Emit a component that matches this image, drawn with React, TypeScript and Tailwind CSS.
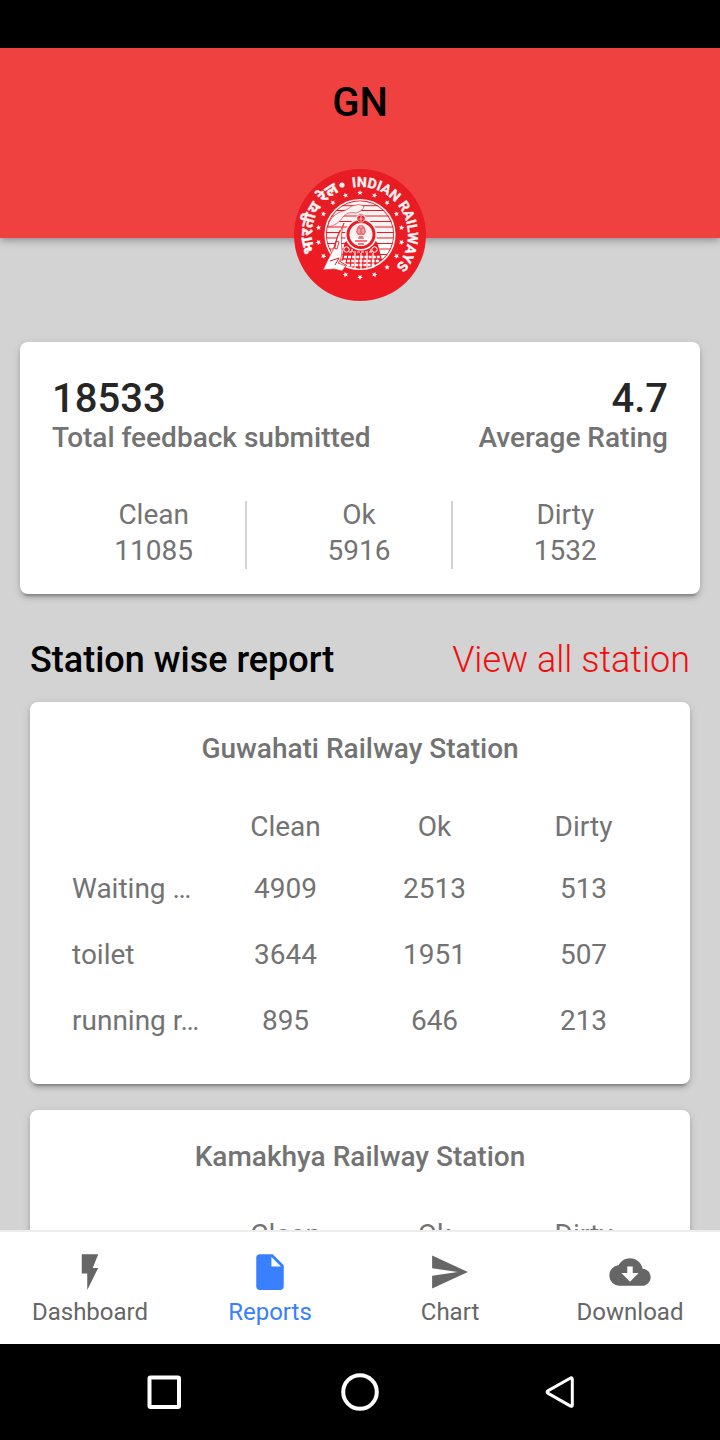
import React from 'react';
import { IoMdCloudDownload, IoMdDocument, IoMdFlash, IoMdSend } from 'react-icons/io';

const totals = [
  { label: 'Clean', value: 11085 },
  { label: 'Ok', value: 5916 },
  { label: 'Dirty', value: 1532 },
];

const stations = [
  {
    name: 'Guwahati Railway Station',
    rows: [
      { area: 'Waiting …', clean: 4909, ok: 2513, dirty: 513 },
      { area: 'toilet', clean: 3644, ok: 1951, dirty: 507 },
      { area: 'running r…', clean: 895, ok: 646, dirty: 213 },
    ],
  },
  { name: 'Kamakhya Railway Station', rows: [] },
];

const tabs = [
  { label: 'Dashboard', icon: IoMdFlash, active: false },
  { label: 'Reports', icon: IoMdDocument, active: true },
  { label: 'Chart', icon: IoMdSend, active: false },
  { label: 'Download', icon: IoMdCloudDownload, active: false },
];

const cardClass =
  'rounded-lg bg-white shadow-[0_6px_2px_-4px_rgba(0,0,0,0.2),0_4px_4px_rgba(0,0,0,0.14),0_2px_10px_rgba(0,0,0,0.12)]';

const starAngles = Array.from({ length: 18 }, (_, i) => i * 20);

const RailwayLogo: React.FC = () => (
  <svg viewBox="0 0 132 132" className="h-[132px] w-[132px]" role="img" aria-label="Indian Railways">
    <defs>
      <path id="ring" d="M66 114a48 48 0 1 1 .01 0" />
      <clipPath id="disc">
        <circle cx="66" cy="65.5" r="34" />
      </clipPath>
      <clipPath id="badge">
        <circle cx="66" cy="66" r="66" />
      </clipPath>
    </defs>
    <circle cx="66" cy="66" r="66" fill="#ed1c24" />

    {/* Ring lettering */}
    <text
      fill="#fff"
      stroke="#fff"
      strokeWidth=".3"
      fontSize="14"
      fontWeight="700"
      fontFamily="Roboto, sans-serif"
    >
      <textPath href="#ring" startOffset="143">INDIAN RAILWAYS</textPath>
    </text>
    <text
      fill="#fff"
      stroke="#fff"
      strokeWidth=".4"
      fontSize="16"
      fontWeight="700"
      fontFamily="'Noto Sans Devanagari', 'Noto Sans', sans-serif"
    >
      <textPath href="#ring" startOffset="57">भारतीय रेल</textPath>
    </text>
    <circle cx="48" cy="16" r="2.6" fill="#fff" />

    {starAngles.map(angle => (
      <path
        key={angle}
        d="M66 21l.8 1.8 1.9.2-1.5 1.2.5 1.9-1.7-1-1.7 1 .5-1.9-1.5-1.2 1.9-.2z"
        fill="#fff"
        transform={`rotate(${angle} 66 66)`}
      />
    ))}

    {/* Striped disc */}
    <circle cx="66" cy="65.5" r="34.8" fill="#ed1c24" stroke="#fff" strokeWidth="1.6" />
    <g clipPath="url(#disc)">
      <circle cx="66" cy="65.5" r="33.2" fill="#fff" />
      <path
        d="M32 36.7h68M32 41.5h68M32 47h68M32 52.5h68M32 58h68M32 63.5h68M32 69h68M32 74.5h68M32 80h68M32 85.5h68M32 91h68"
        stroke="#ed1c24"
        strokeWidth="1"
      />
    </g>

    {/* Engine front */}
    <path d="M50 76q1-5 6-5h22q5 0 6 5l4 15q-22 17-40 0z" fill="#ed1c24" />
    <path
      d="M50 88h36M49 92h37M53 96h28"
      stroke="#fff"
      strokeWidth="2.6"
      strokeDasharray="3 1.1"
    />
    <path d="M61 84v15M67 84v16M73 84v15M79 84v13" stroke="#fff" strokeWidth="1.2" />
    <path d="M55 83h25M58 80v4M77 80v4" stroke="#fff" strokeWidth="1.2" strokeDasharray="3 1" />
    <circle cx="52.5" cy="80.5" r="2.7" fill="#ed1c24" stroke="#fff" />
    <circle cx="80.5" cy="80.5" r="2.7" fill="#ed1c24" stroke="#fff" />
    <circle cx="67" cy="65.5" r="16" fill="#fff" />
    <circle cx="67" cy="65.5" r="13" fill="none" stroke="#ed1c24" strokeWidth="3" />
    <circle cx="67" cy="49" r="4.2" fill="#ed1c24" stroke="#fff" strokeWidth=".8" />
    <path d="M63 48q4-4 8 0M67 47v5M64.5 50h5" stroke="#fff" strokeWidth=".8" fill="none" />

    {/* Emblem */}
    <path
      d="M63 59q1-3 4-3t4 3l1 4-2 3h-6l-2-3zM65 67h4l1 3h-6zM61 71h12v2h-12zM64 74h6v2h-6z"
      fill="#ed1c24"
      opacity=".6"
    />
    <path d="M65 60v4M69 60v4M66 58h2" stroke="#fff" strokeWidth=".7" />

    {/* Smoke and side of the train */}
    <path
      d="M34 58q1-10 12-15 8-2 12-6 7-3 12 0-1 5-8 7-8-2-13 4-5 8-15 10z"
      fill="#fff"
      stroke="#ed1c24"
      strokeWidth=".6"
    />
    <path
      d="M50 54q-4 11-2 27 0 9-4 13l8 3-4 5-8-2-11 1q5-11 10-20 4-13 11-27z"
      fill="#fff"
      stroke="#ed1c24"
      strokeWidth=".7"
    />
    <path d="M46 61q-4 7-5 18M42 72l3 1-2 7-3-1z" stroke="#ed1c24" strokeWidth=".9" fill="none" />
    <path d="M36 92l9-3-4 7" stroke="#ed1c24" strokeWidth="1" fill="none" />

    {/* Header edge falling across the badge */}
    <rect width="132" height="69" clipPath="url(#badge)" fill="#8b1a3a" opacity=".06" />
  </svg>
);

const Header: React.FC = () => (
  <header className="relative z-10 h-[190px] shrink-0 bg-[#f04141] shadow-[0_2px_8px_rgba(0,0,0,0.35)]">
    <h1 className="pt-[31px] text-center text-[40px] leading-12 font-medium text-black">GN</h1>
    <div className="absolute -bottom-[63px] left-1/2 -translate-x-1/2">
      <RailwayLogo />
    </div>
  </header>
);

const Summary: React.FC = () => (
  <section className={`mx-5 mt-[104px] px-8 pt-8 pb-[25px] ${cardClass}`}>
    <div className="flex justify-between">
      <div>
        <p className="text-[40px] leading-[50px] font-medium text-[#262626]">18533</p>
        <p className="text-[28px] leading-7 font-medium text-[#737373]">Total feedback submitted</p>
      </div>
      <div className="text-right">
        <p className="text-[40px] leading-[50px] font-medium text-[#262626]">4.7</p>
        <p className="text-[28px] leading-7 font-medium text-[#737373]">Average Rating</p>
      </div>
    </div>
    <div className="mt-[49px] grid grid-cols-3 text-center text-[28px] leading-7 text-[#737373]">
      {totals.map((item, index) => (
        <div key={item.label} className="px-2.5">
          <div
            className={`flex flex-col gap-2 pb-1 ${index < totals.length - 1 ? 'border-r-2 border-[#d3d3d3]' : ''}`}
          >
            <p>{item.label}</p>
            <p>{item.value}</p>
          </div>
        </div>
      ))}
    </div>
  </section>
);

const StationCard: React.FC<{ station: (typeof stations)[number] }> = ({ station }) => (
  <section className={`px-8 pt-7 pb-[30px] text-[28px] text-[#737373] ${cardClass}`}>
    <h3 className="text-center leading-[38px] font-medium">{station.name}</h3>
    <table className="mt-[30px] w-full table-fixed text-center">
      <thead>
        <tr className="h-[58px]">
          <td />
          <th scope="col" className="font-normal">Clean</th>
          <th scope="col" className="font-normal">Ok</th>
          <th scope="col" className="font-normal">Dirty</th>
        </tr>
      </thead>
      <tbody>
        {station.rows.map(row => (
          <tr key={row.area} className="h-[66px]">
            <th scope="row" className="pl-2.5 text-left font-normal whitespace-nowrap">{row.area}</th>
            <td>{row.clean}</td>
            <td>{row.ok}</td>
            <td>{row.dirty}</td>
          </tr>
        ))}
      </tbody>
    </table>
  </section>
);

const TabBar: React.FC = () => (
  <nav className="grid shrink-0 grid-cols-4 border-t-2 border-[#ededed] bg-white">
    {tabs.map(tab => (
      <button
        key={tab.label}
        type="button"
        className={`flex flex-col items-center gap-1 pt-[18px] pb-[18px] ${tab.active ? 'text-[#3880ff]' : 'text-[#666666]'}`}
      >
        <tab.icon size={44} />
        <span className="text-2xl leading-7">{tab.label}</span>
      </button>
    ))}
  </nav>
);

const SystemNav: React.FC = () => (
  <div className="flex h-24 shrink-0 items-center justify-between bg-black px-[20%] text-white">
    <button type="button" aria-label="Recent apps">
      <svg viewBox="0 0 40 40" className="h-10 w-10" fill="none" stroke="currentColor" strokeWidth="4" strokeLinejoin="round">
        <rect x="5.5" y="5.5" width="29.5" height="29.5" rx="1" />
      </svg>
    </button>
    <button type="button" aria-label="Home">
      <svg viewBox="0 0 40 40" className="h-10 w-10" fill="none" stroke="currentColor" strokeWidth="4">
        <circle cx="20" cy="20" r="16.8" />
      </svg>
    </button>
    <button type="button" aria-label="Back">
      <svg viewBox="0 0 40 40" className="h-10 w-10" fill="none" stroke="currentColor" strokeWidth="3" strokeLinejoin="round">
        <path d="M12.2 18.6L34.6 6q1.7-.6 1.7 1.2v25.8q0 1.7-1.7 1.1L12.2 21.4q-2.2-1.4 0-2.8z" />
      </svg>
    </button>
  </div>
);

export default function App() {
  return (
    <div className="flex h-screen flex-col overflow-hidden bg-[#d3d3d3] font-[Roboto,sans-serif]">
      <div className="h-12 shrink-0 bg-black" />
      <Header />
      <main className="min-h-0 flex-1 overflow-hidden">
        <Summary />
        <div className="flex items-center justify-between px-[30px] pt-[46px] pb-[22px] text-4xl leading-10">
          <h2 className="font-medium text-black">Station wise report</h2>
          <a href="#stations" className="font-light text-[#f20d0d]">View all station</a>
        </div>
        <div id="stations" className="flex flex-col gap-[26px] px-[30px]">
          {stations.map(station => (
            <StationCard key={station.name} station={station} />
          ))}
        </div>
      </main>
      <TabBar />
      <SystemNav />
    </div>
  );
}
